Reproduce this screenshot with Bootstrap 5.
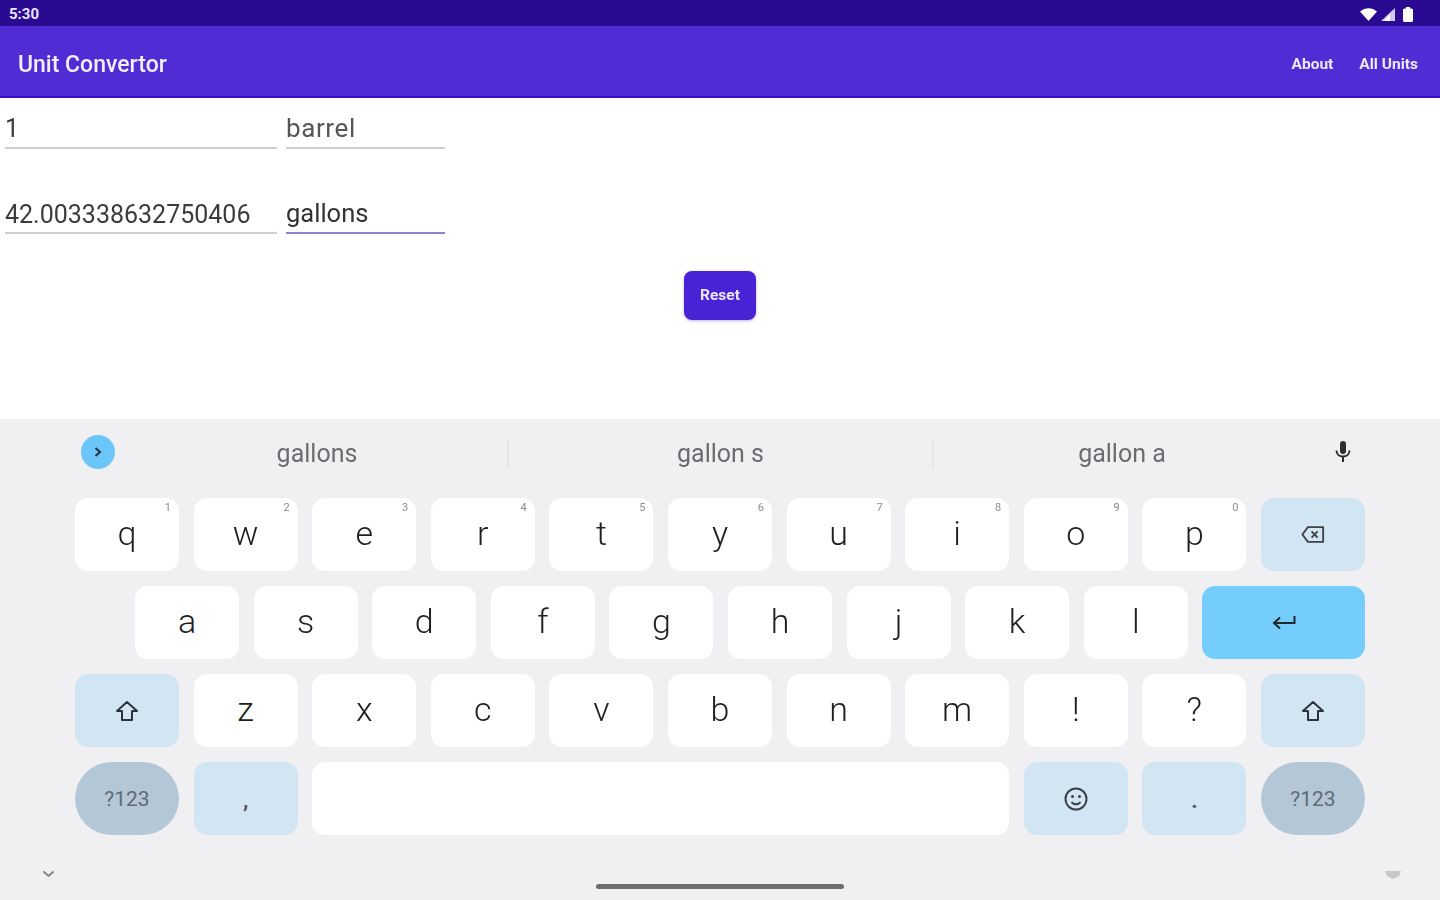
<!DOCTYPE html>
<html lang="en">
<head>
  <meta charset="UTF-8">
  <meta name="viewport" content="width=device-width, initial-scale=1.0">
  <title>Unit Convertor</title>
  <link href="https://cdn.jsdelivr.net/npm/bootstrap@5.3.3/dist/css/bootstrap.min.css" rel="stylesheet">
  <style>
    html, body { height: 100%; }
    body { font-family: Roboto, "Liberation Sans", sans-serif; background: #fff; overflow: hidden; }
    .app-shell { width: 1440px; height: 900px; filter: blur(.6px); }
    .status-strip { height: 26px; background: #2a0a91; color: #e9e4fb; font-size: 15px; font-weight: 700; padding: 3px 27px 0 9px; }
    .app-bar { height: 72px; background: #512bd4; border-bottom: 2px solid #3a10c8; padding: 8px 22px 0 18px; }
    .app-bar .navbar-brand { color: #f2effd; font-size: 23px; font-weight: 500; padding: 0; margin: 0; line-height: 30px; }
    .app-bar .nav-link { color: #ece8fb; font-size: 15.5px; font-weight: 700; padding: 0; margin-top: -1px; }
    .nav-gap { gap: 26px; }
    .form-area { height: 321px; padding: 0 5px; }
    .field-row { gap: 9px; }
    .field-row + .field-row { margin-top: 34px; }
    .field-box { height: 51px; padding-top: 15px; font-size: 25px; line-height: 30px; color: #3c3c3f; border-bottom: 2px solid #cfcfd1; white-space: nowrap; }
    .field-num { width: 272px; padding-top: 16px; }
    .field-num-long { padding-top: 17px; }
    .field-unit { width: 159px; font-size: 26px; letter-spacing: .6px; color: #55565a; }
    .field-active { border-bottom-color: #8d84d8; color: #333; font-size: 25.5px; letter-spacing: 0; }
    .reset-wrap { margin-top: 37px; }
    .reset-btn { width: 72px; height: 49px; padding: 0; background: #4a22d6; border: 0; border-radius: 8px; color: #ebe6fb; font-size: 15.5px; font-weight: 700; box-shadow: 0 1px 3px rgba(74, 34, 214, .35); }
    .kbd-panel { height: 481px; background: #f0f0f3; position: relative; }
    .suggest-strip { height: 79px; padding: 0 81px 10px; }
    .suggest-toggle { width: 34px; height: 34px; margin: -4px 12px 0 0; background: #6cc6fa; flex: none; }
    .suggest-word { height: 28px; font-size: 25px; line-height: 28px; color: #6b6c6f; }
    .suggest-word + .suggest-word { border-left: 2px solid #e6e7ea; }
    .word-mid { width: 425px; }
    .word-end { width: 378px; }
    .word-first { width: 380px; }
    .mic-icon { margin-left: 24px; margin-top: -4px; }
    .key-rows { padding: 0 75px; display: flex; flex-direction: column; gap: 15px; }
    .key-row { display: flex; gap: 14.6px; height: 73px; }
    .key-row-home { padding-left: 60px; }
    .kb-key { position: relative; width: 104px; flex: none; background: #fff; border-radius: 13px; color: #1f1f21; font-size: 34px; font-weight: 300; line-height: 1; padding-bottom: 3px; display: flex; align-items: center; justify-content: center; }
    .kb-key sup { position: absolute; top: 4px; right: 8px; font-size: 11px; line-height: 1; color: #8c8d90; font-weight: 400; }
    .key-fn { background: #d2e5f3; color: #3e4145; padding-bottom: 0; }
    .key-enter { flex: 1 1 auto; background: #74cdfd; padding-bottom: 0; }
    .key-mode { background: #b3c7d6; border-radius: 37px; color: #5f6b75; font-size: 21px; font-weight: 400; padding: 2px 0 0; }
    .key-space { flex: 1 1 auto; }
    .key-mark { font-size: 22px; padding-top: 4px; font-weight: 700; color: #55595e; }
    .kbd-foot { position: absolute; left: 0; right: 0; top: 451px; height: 20px; padding: 0 38px 0 42px; }
    .home-bar { width: 248px; height: 5px; background: #6d6d70; border-radius: 3px; margin-top: 14px; }
  </style>
</head>
<body>
  <div class="app-shell d-flex flex-column">
    <div class="status-strip d-flex align-items-center justify-content-between">
      <span>5:30</span>
      <span class="d-flex align-items-center gap-1">
        <svg width="17" height="13" viewBox="0 0 17 13"><path d="M0 3.500C5 -1 12 -1 17 3.500L8.500 13Z" fill="#fff"/></svg>
        <svg width="14" height="13" viewBox="0 0 14 13"><path d="M14 0V13H0Z" fill="#cfc9ef"/><path d="M9 13V6L3 13Z" fill="#fff"/></svg>
        <svg class="ms-1" width="10" height="15" viewBox="0 0 10 15"><path d="M3 0H7V1.500H8.500A1.500 1.500 0 0 1 10 3V13.500A1.500 1.500 0 0 1 8.500 15H1.500A1.500 1.500 0 0 1 0 13.500V3A1.500 1.500 0 0 1 1.500 1.500H3Z" fill="#fff"/></svg>
      </span>
    </div>

    <nav class="navbar app-bar d-flex align-items-center justify-content-between flex-nowrap">
      <a class="navbar-brand" href="#">Unit Convertor</a>
      <div class="d-flex nav-gap">
        <a class="nav-link" href="#">About</a>
        <a class="nav-link" href="#">All Units</a>
      </div>
    </nav>

    <main class="form-area">
      <div class="d-flex field-row">
        <div class="field-box field-num">1</div>
        <div class="field-box field-unit">barrel</div>
      </div>
      <div class="d-flex field-row">
        <div class="field-box field-num field-num-long">42.003338632750406</div>
        <div class="field-box field-unit field-active">gallons</div>
      </div>
      <div class="text-center reset-wrap">
        <button type="button" class="btn reset-btn">Reset</button>
      </div>
    </main>

    <section class="kbd-panel">
      <div class="suggest-strip d-flex align-items-center">
        <span class="suggest-toggle rounded-circle d-flex align-items-center justify-content-center">
          <svg width="8" height="10" viewBox="0 0 8 10"><path d="M1.500 1L6 5L1.500 9" fill="none" stroke="#22323d" stroke-width="2"/></svg>
        </span>
        <div class="suggest-word word-first text-center">gallons</div>
        <div class="suggest-word word-mid text-center">gallon s</div>
        <div class="suggest-word word-end text-center">gallon a</div>
        <svg class="mic-icon" width="18" height="24" viewBox="0 0 18 24"><rect x="6" y="1" width="6" height="13" rx="3" fill="#2c2e31"/><path d="M2.500 10.500C2.500 18.500 15.500 18.500 15.500 10.500" fill="none" stroke="#2c2e31" stroke-width="2"/><rect x="8" y="16" width="2" height="6" fill="#2c2e31"/></svg>
      </div>

      <div class="key-rows">
        <div class="key-row">
          <div class="kb-key">q<sup>1</sup></div>
          <div class="kb-key">w<sup>2</sup></div>
          <div class="kb-key">e<sup>3</sup></div>
          <div class="kb-key">r<sup>4</sup></div>
          <div class="kb-key">t<sup>5</sup></div>
          <div class="kb-key">y<sup>6</sup></div>
          <div class="kb-key">u<sup>7</sup></div>
          <div class="kb-key">i<sup>8</sup></div>
          <div class="kb-key">o<sup>9</sup></div>
          <div class="kb-key">p<sup>0</sup></div>
          <div class="kb-key key-fn">
            <svg width="24" height="19" viewBox="0 0 26 20"><path d="M7.500 2H24V18H7.500L1.500 10Z" fill="none" stroke="#3e4145" stroke-width="2" stroke-linejoin="round"/><path d="M11.500 6.500L18 13.500M18 6.500L11.500 13.500" stroke="#3e4145" stroke-width="2"/></svg>
          </div>
        </div>
        <div class="key-row key-row-home">
          <div class="kb-key">a</div>
          <div class="kb-key">s</div>
          <div class="kb-key">d</div>
          <div class="kb-key">f</div>
          <div class="kb-key">g</div>
          <div class="kb-key">h</div>
          <div class="kb-key">j</div>
          <div class="kb-key">k</div>
          <div class="kb-key">l</div>
          <div class="kb-key key-enter">
            <svg width="24" height="16" viewBox="0 0 24 16"><path d="M22.500 1V8H2.500M8 2.500L2 8L8 13.500" fill="none" stroke="#22282d" stroke-width="2"/></svg>
          </div>
        </div>
        <div class="key-row">
          <div class="kb-key key-fn">
            <svg width="24" height="22" viewBox="0 0 24 22"><path d="M12 2L22 11H17V20H7V11H2Z" fill="none" stroke="#2d3338" stroke-width="2" stroke-linejoin="round"/></svg>
          </div>
          <div class="kb-key">z</div>
          <div class="kb-key">x</div>
          <div class="kb-key">c</div>
          <div class="kb-key">v</div>
          <div class="kb-key">b</div>
          <div class="kb-key">n</div>
          <div class="kb-key">m</div>
          <div class="kb-key">!</div>
          <div class="kb-key">?</div>
          <div class="kb-key key-fn">
            <svg width="24" height="22" viewBox="0 0 24 22"><path d="M12 2L22 11H17V20H7V11H2Z" fill="none" stroke="#2d3338" stroke-width="2" stroke-linejoin="round"/></svg>
          </div>
        </div>
        <div class="key-row">
          <div class="kb-key key-mode">?123</div>
          <div class="kb-key key-fn key-mark">,</div>
          <div class="kb-key key-space"></div>
          <div class="kb-key key-fn">
            <svg width="24" height="24" viewBox="0 0 24 24"><circle cx="12" cy="12" r="10.500" fill="none" stroke="#3e4145" stroke-width="2"/><circle cx="8.500" cy="9.500" r="1.500" fill="#3e4145"/><circle cx="15.500" cy="9.500" r="1.500" fill="#3e4145"/><path d="M7.500 15C9.500 18 14.500 18 16.500 15" fill="none" stroke="#3e4145" stroke-width="2"/></svg>
          </div>
          <div class="kb-key key-fn key-mark">.</div>
          <div class="kb-key key-mode">?123</div>
        </div>
      </div>

      <div class="kbd-foot d-flex justify-content-between align-items-start">
        <svg width="13" height="8" viewBox="0 0 13 8"><path d="M1.500 1.500L6.500 6L11.500 1.500" fill="none" stroke="#85878b" stroke-width="2"/></svg>
        <div class="home-bar"></div>
        <svg width="18" height="10" viewBox="0 0 18 10"><path d="M1 1H17L15 6L9 9L3 6Z" fill="#c6c7ca"/></svg>
      </div>
    </section>
  </div>
  <script src="https://cdn.jsdelivr.net/npm/bootstrap@5.3.3/dist/js/bootstrap.bundle.min.js"></script>
</body>
</html>
